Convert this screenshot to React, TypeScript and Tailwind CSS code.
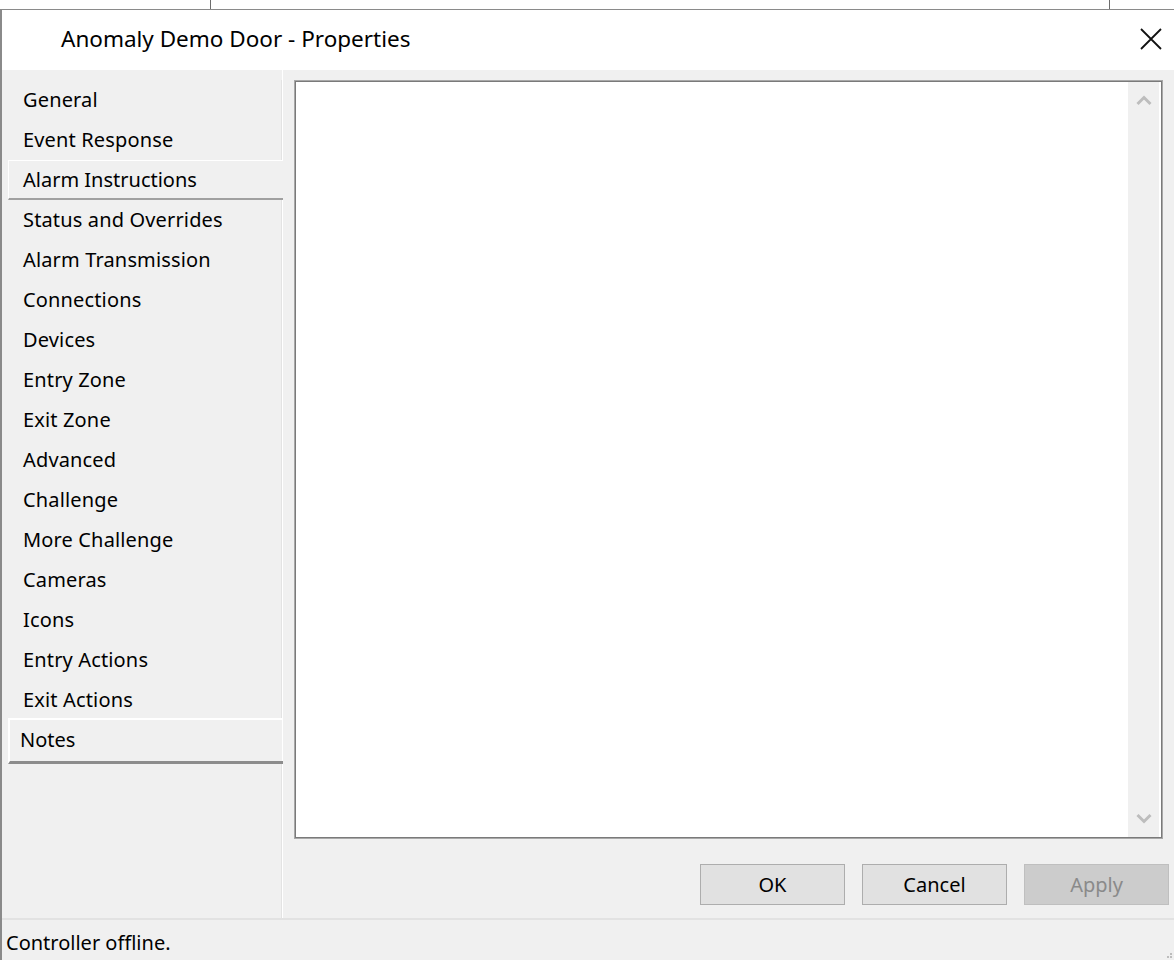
import React from "react";

const tabs = [
  "General",
  "Event Response",
  "Alarm Instructions",
  "Status and Overrides",
  "Alarm Transmission",
  "Connections",
  "Devices",
  "Entry Zone",
  "Exit Zone",
  "Advanced",
  "Challenge",
  "More Challenge",
  "Cameras",
  "Icons",
  "Entry Actions",
  "Exit Actions",
];

const font = { fontFamily: '"Noto Sans", "Open Sans", sans-serif' };

export default function App() {
  return (
    <div className="relative w-[1174px] h-[960px] bg-white overflow-hidden text-[#000]" style={font}>
      {/* background window strip */}
      <div className="h-[9px] flex">
        <div className="w-[210px]" />
        <div className="w-[900px] border-x border-[#6d6d6d]" />
      </div>
      {/* dialog */}
      <div className="h-[951px] border-t border-l-2 border-[#8a8a8a] flex flex-col">
        {/* title bar */}
        <div className="h-[60px] bg-white flex items-center shrink-0">
          <div className="pl-[59px] text-[22.5px] leading-none text-[#000] flex-1 pb-[2px]">
            Anomaly Demo Door - Properties
          </div>
          <div className="w-[34px] mr-[6px] flex items-center justify-center pb-[2px]">
            <svg width="24" height="24" viewBox="0 0 24 24">
              <path d="M2 2 L22 22 M22 2 L2 22" stroke="#111" strokeWidth="1.8" />
            </svg>
          </div>
        </div>
        {/* body */}
        <div className="flex-1 flex bg-[#f0f0f0] min-h-0">
          {/* left tab list */}
          <div className="w-[281px] shrink-0 flex flex-col pt-[10px] pl-[6px] border-r border-white">
            {tabs.map((t) => {
              const sel = t === "Alarm Instructions";
              return (
                <div
                  key={t}
                  className={
                    sel
                      ? "h-[40px] flex items-center pl-[14px] border-t border-l border-white border-b-2 border-b-[#a0a0a0] bg-[#f0f0f0] text-[20px] -mr-[1px]"
                      : "h-[40px] flex items-center pl-[15px] text-[20px] tracking-[0.15px] border-r border-[#e3e3e3]"
                  }
                >
                  {t}
                </div>
              );
            })}
            <div className="h-[46px] -mt-[2px] flex items-center pl-[10px] border-t-2 border-l-2 border-white border-b-[3px] border-b-[#8c8c8c] text-[20px] pb-[2px] -mr-[1px]">
              Notes
            </div>
            <div className="flex-1 border-r border-[#e3e3e3]" />
          </div>
          {/* right content */}
          <div className="flex-1 flex flex-col pl-[11px] pr-[11px] pt-[10px]">
            <div className="h-[759px] border border-[#a8a8a8] p-0">
              <div className="h-full border border-[#7a7a7a] bg-white flex justify-end pr-[2px]">
                <div className="w-[31px] bg-[#f0f0f0] flex flex-col items-center justify-between py-[13px]">
                  <svg width="16" height="11" viewBox="0 0 16 11">
                    <path d="M1.5 9 L8 2.5 L14.5 9" stroke="#bdbdbd" strokeWidth="3" fill="none" />
                  </svg>
                  <svg width="16" height="11" viewBox="0 0 16 11">
                    <path d="M1.5 2 L8 8.5 L14.5 2" stroke="#bdbdbd" strokeWidth="3" fill="none" />
                  </svg>
                </div>
              </div>
            </div>
            <div className="flex justify-end gap-[17px] mt-[25px] -mr-[6px]">
              <button className="w-[145px] h-[41px] bg-[#e1e1e1] border border-[#adadad] text-[20px] text-black">
                OK
              </button>
              <button className="w-[145px] h-[41px] bg-[#e1e1e1] border border-[#adadad] text-[20px] text-black">
                Cancel
              </button>
              <button className="w-[145px] h-[41px] bg-[#cccccc] border border-[#bfbfbf] text-[20px] text-[#8a8a8a]">
                Apply
              </button>
            </div>
          </div>
        </div>
        {/* status bar */}
        <div className="h-[42px] shrink-0 bg-[#f0f0f0] border-t-2 border-[#e2e2e2] flex items-center pl-[4px] relative">
          <span className="text-[20px] pt-[6px]">Controller offline.</span>
          <div className="absolute right-[2px] bottom-[2px] grid grid-cols-3 gap-[1px]">
            <div className="w-[2px] h-[2px]" />
            <div className="w-[2px] h-[2px]" />
            <div className="w-[2px] h-[2px] bg-[#bdbdbd]" />
            <div className="w-[2px] h-[2px]" />
            <div className="w-[2px] h-[2px] bg-[#bdbdbd]" />
            <div className="w-[2px] h-[2px] bg-[#bdbdbd]" />
          </div>
        </div>
      </div>
    </div>
  );
}
